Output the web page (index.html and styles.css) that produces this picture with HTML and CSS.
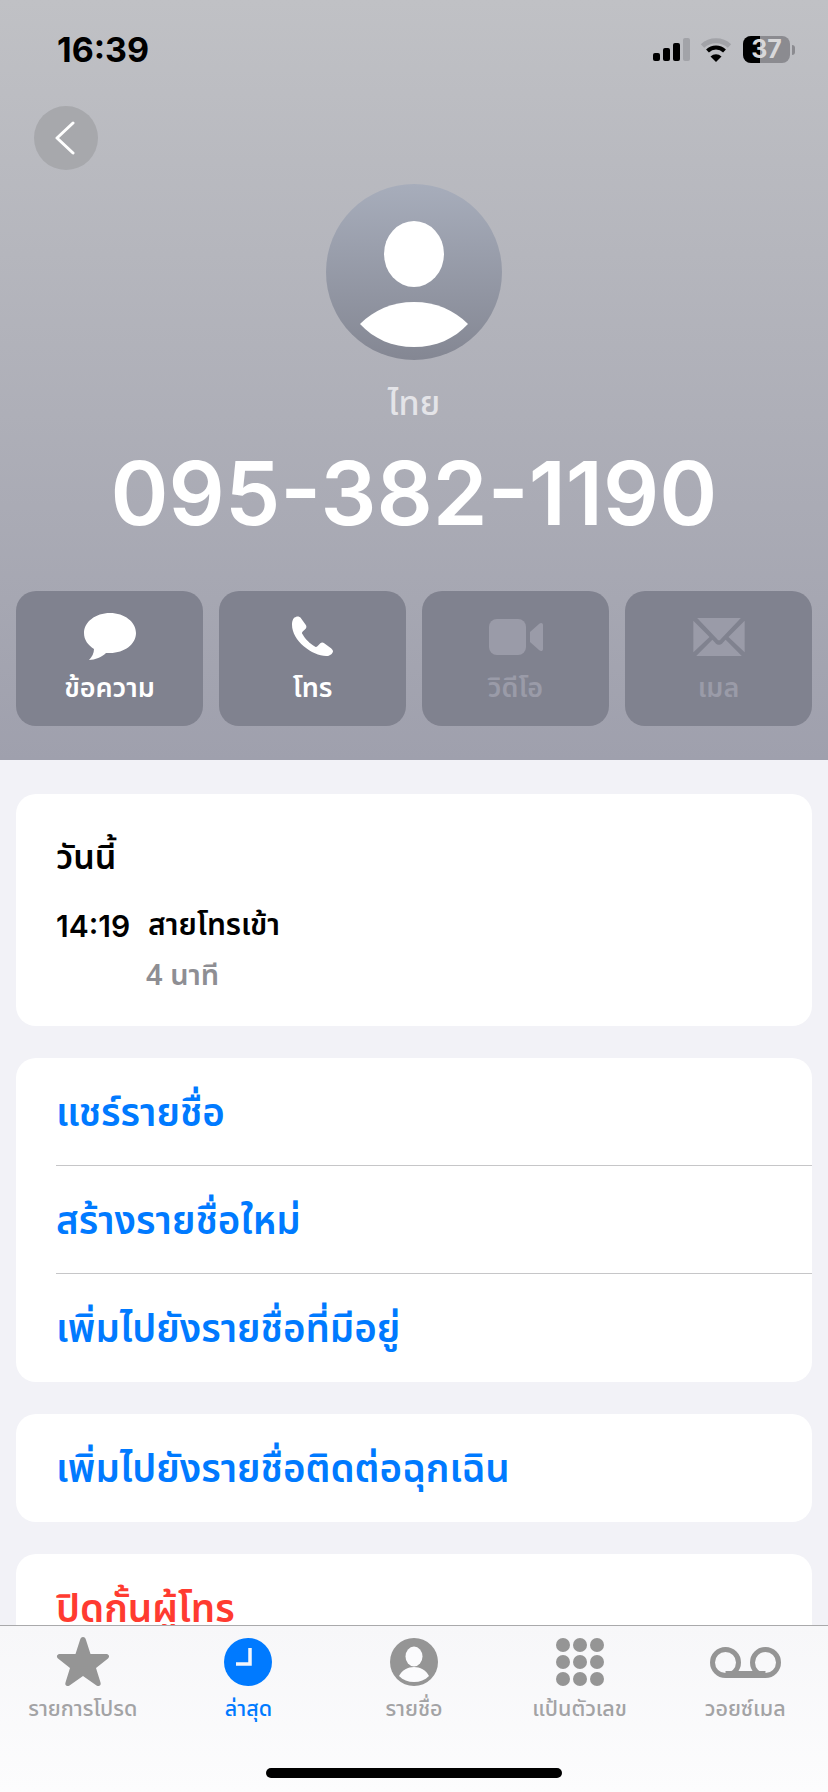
FILE: index.html
```html
<!DOCTYPE html>
<html lang="th">
<head>
    <meta charset="UTF-8">
    <title>095-382-1190</title>
    <link rel="stylesheet" href="styles.css">
</head>
<body>
    <div class="phone">
        <div class="header">
            <div class="statusbar">
                <span class="clock">16:39</span>
                <div class="status-icons">
                    <svg width="37" height="23" viewBox="0 0 37 23">
                        <rect x="0" y="15" width="7" height="8" rx="2" fill="#000"/>
                        <rect x="10" y="10" width="7" height="13" rx="2" fill="#000"/>
                        <rect x="20" y="5" width="7" height="18" rx="2" fill="#000"/>
                        <rect x="30" y="0" width="7" height="23" rx="2" fill="#a2a3a8"/>
                    </svg>
                    <svg width="32" height="24" viewBox="0 0 31 24">
                        <path d="M2 8 A20 20 0 0 1 29 8" fill="none" stroke="#a2a3a8" stroke-width="5"/>
                        <path d="M7 13 A12 12 0 0 1 24 13" fill="none" stroke="#000" stroke-width="4"/>
                        <path d="M15.500 24 L10 18.500 A8 8 0 0 1 21 18.500 Z" fill="#000"/>
                    </svg>
                    <div class="battery">
                        <div class="battery-level"></div>
                        <span class="battery-num">37</span>
                    </div>
                    <div class="battery-tip"></div>
                </div>
            </div>
            <div class="backbtn">
                <svg width="22" height="34" viewBox="0 0 22 34"><path d="M18 2 L2 17 L18 32" fill="none" stroke="#fff" stroke-width="3" stroke-linecap="round" stroke-linejoin="round"/></svg>
            </div>
            <div class="avatar">
                <svg width="176" height="176" viewBox="0 0 176 176">
                    <ellipse cx="88" cy="70" rx="30" ry="33" fill="#fff"/>
                    <path d="M34 140 C48 126 66 118 88 118 C110 118 128 126 142 140 C128 155 110 163 88 163 C66 163 48 155 34 140 Z" fill="#fff"/>
                </svg>
            </div>
            <div class="country">ไทย</div>
            <div class="number">095-382-1190</div>
            <div class="actions">
                <div class="action">
                    <div class="action-icon">
                        <svg width="52" height="47" viewBox="0 0 52 47"><path d="M26 0 C11.500 0 0 9 0 20 C0 27 4 32 10 36 C10 40 8 44 5 47 C11 47 18 44 22 40 C23 40 25 40 26 40 C40.500 40 52 31 52 20 C52 9 40.500 0 26 0 Z" fill="#fff"/></svg>
                    </div>
                    <span>ข้อความ</span>
                </div>
                <div class="action">
                    <div class="action-icon">
                        <svg width="43" height="41" viewBox="0 0 44 42"><path d="M5 1 C3 1 1 4 1 9 C1 17 6 25 13 31 C20 37 29 41 36 41 C40 41 43 38 43 36 C43 35 42 34 41 33 L34 28 C33 27 31 27 30 28 L27 31 C26 32 25 32 24 31 C20 29 14 23 12 19 C11 18 11 17 12 16 L15 13 C16 12 16 10 15 9 L10 2 C9 1 7 0 5 1 Z" fill="#fff"/></svg>
                    </div>
                    <span>โทร</span>
                </div>
                <div class="action action-off">
                    <div class="action-icon">
                        <svg width="54" height="36" viewBox="0 0 54 36"><rect x="0" y="0" width="37" height="36" rx="8" fill="#9a9ba8"/><path d="M41 13 L50 5 C52 3 54 4 54 6 L54 30 C54 32 52 33 50 31 L41 23 Z" fill="#9a9ba8"/></svg>
                    </div>
                    <span>วิดีโอ</span>
                </div>
                <div class="action action-off">
                    <div class="action-icon">
                        <svg width="52" height="38" viewBox="0 0 54 40"><path d="M4 0 L50 0 L29 22 C28 24 26 24 25 22 Z M0 3 L17 20 L0 36 Z M54 3 L37 20 L54 36 Z M3 40 L20 23 L23 26 C25 29 29 29 31 26 L34 23 L51 40 Z" fill="#9a9ba8"/></svg>
                    </div>
                    <span>เมล</span>
                </div>
            </div>
        </div>

        <div class="content">
            <div class="card recents">
                <div class="recents-title">วันนี้</div>
                <div class="recents-row">
                    <span class="recents-time">14:19</span>
                    <span>สายโทรเข้า</span>
                </div>
                <div class="recents-duration">4 นาที</div>
            </div>
            <div class="card">
                <div class="row">แชร์รายชื่อ</div>
                <div class="row">สร้างรายชื่อใหม่</div>
                <div class="row">เพิ่มไปยังรายชื่อที่มีอยู่</div>
            </div>
            <div class="card">
                <div class="row">เพิ่มไปยังรายชื่อติดต่อฉุกเฉิน</div>
            </div>
            <div class="card">
                <div class="row row-danger">ปิดกั้นผู้โทร</div>
            </div>
        </div>

        <div class="tabbar">
            <div class="tab">
                <div class="tab-icon">
                    <svg width="54" height="50" viewBox="0 0 54 50"><path d="M27 0 C28.500 0 29.500 1 30 3 L34.500 17 L50 17 C53 17 54 19.500 52 21.500 L40 31 L44.500 45.500 C45.500 48.500 43 50 40.500 48.500 L27 39 L13.500 48.500 C11 50 8.500 48.500 9.500 45.500 L14 31 L2 21.500 C0 19.500 1 17 4 17 L19.500 17 L24 3 C24.500 1 25.500 0 27 0 Z" fill="#959595"/></svg>
                </div>
                <span>รายการโปรด</span>
            </div>
            <div class="tab tab-active">
                <div class="tab-icon">
                    <svg width="48" height="48" viewBox="0 0 48 48"><circle cx="24" cy="24" r="24" fill="#007aff"/><path d="M26 10 L26 26 L12 26" fill="none" stroke="#f4f6fb" stroke-width="3.500"/></svg>
                </div>
                <span>ล่าสุด</span>
            </div>
            <div class="tab">
                <div class="tab-icon">
                    <svg width="48" height="48" viewBox="0 0 48 48"><circle cx="24" cy="24" r="24" fill="#959595"/><ellipse cx="24" cy="18.500" rx="8.500" ry="10" fill="#fbfbfd"/><path d="M9 38 C12 32 18 29 24 29 C30 29 36 32 39 38 C35 42 30 44 24 44 C18 44 13 42 9 38 Z" fill="#fbfbfd"/></svg>
                </div>
                <span>รายชื่อ</span>
            </div>
            <div class="tab">
                <div class="tab-icon">
                    <svg width="50" height="48" viewBox="0 0 50 48">
                        <g fill="#959595">
                            <circle cx="8" cy="7" r="7"/><circle cx="25" cy="7" r="7"/><circle cx="42" cy="7" r="7"/>
                            <circle cx="8" cy="24" r="7"/><circle cx="25" cy="24" r="7"/><circle cx="42" cy="24" r="7"/>
                            <circle cx="8" cy="41" r="7"/><circle cx="25" cy="41" r="7"/><circle cx="42" cy="41" r="7"/>
                        </g>
                    </svg>
                </div>
                <span>แป้นตัวเลข</span>
            </div>
            <div class="tab">
                <div class="tab-icon">
                    <svg width="71" height="31" viewBox="0 0 71 31"><circle cx="15.500" cy="15.500" r="13" fill="none" stroke="#959595" stroke-width="5"/><circle cx="55.500" cy="15.500" r="13" fill="none" stroke="#959595" stroke-width="5"/><rect x="15.500" y="24" width="40" height="7" fill="#959595"/></svg>
                </div>
                <span>วอยซ์เมล</span>
            </div>
        </div>
        <div class="homebar"></div>
    </div>
</body>
</html>
```

FILE: styles.css
```css
body {
    font-family: "Noto Sans Thai", "Noto Sans", "Liberation Sans", sans-serif;
    margin: 0;
    background-color: #f2f2f7;
}
.phone {
    position: relative;
    width: 828px;
    height: 1792px;
    overflow: hidden;
}
.header {
    height: 760px;
    background: linear-gradient(#c0c1c5, #9fa0ad);
    padding: 0 16px;
    box-sizing: border-box;
    display: flex;
    flex-direction: column;
    align-items: center;
}
.statusbar {
    width: 100%;
    display: flex;
    justify-content: space-between;
    align-items: center;
    padding: 31px 17px 0 41px;
    box-sizing: border-box;
    height: 68px;
}
.clock {
    font-family: Inter, "Liberation Sans", sans-serif;
    font-size: 34px;
    font-weight: 700;
    color: #000;
}
.status-icons {
    display: flex;
    align-items: center;
    gap: 10px;
}
.battery {
    position: relative;
    width: 47px;
    height: 27px;
    border-radius: 8px;
    background-color: #8b8b90;
    margin-left: 1px;
}
.battery-level {
    width: 17px;
    height: 27px;
    border-radius: 8px 0 0 8px;
    background-color: #000;
}
.battery-num {
    position: absolute;
    top: 0;
    left: 0;
    width: 47px;
    text-align: center;
    font-family: Inter, "Liberation Sans", sans-serif;
    font-size: 25px;
    line-height: 27px;
    font-weight: 700;
    color: #d8d8da;
}
.battery-tip {
    width: 3px;
    height: 10px;
    margin-left: -8px;
    border-radius: 0 4px 4px 0;
    background-color: #8b8b90;
}
.backbtn {
    align-self: flex-start;
    width: 64px;
    height: 64px;
    margin: 38px 0 0 18px;
    border-radius: 50%;
    background-color: #a7a8ac;
    display: flex;
    align-items: center;
    justify-content: center;
}
.avatar {
    width: 176px;
    height: 176px;
    margin-top: 14px;
    border-radius: 50%;
    overflow: hidden;
    background: linear-gradient(#a7adbb, #848793);
    flex-shrink: 0;
}
.avatar svg {
    display: block;
}
.country {
    margin-top: 23px;
    font-size: 34px;
    line-height: 44px;
    font-weight: 500;
    color: #e4e4e8;
}
.number {
    margin-top: 16px;
    font-family: Inter, "Liberation Sans", sans-serif;
    font-size: 88px;
    line-height: 100px;
    font-weight: 600;
    color: #fff;
    white-space: nowrap;
}
.actions {
    width: 100%;
    display: flex;
    gap: 16px;
    margin-top: 48px;
}
.action {
    flex: 1;
    height: 135px;
    border-radius: 20px;
    background-color: #80828f;
    display: flex;
    flex-direction: column;
    align-items: center;
    padding-top: 22px;
    box-sizing: border-box;
    font-size: 27px;
    line-height: 36px;
    font-weight: 600;
    color: #fff;
}
.action-icon {
    height: 47px;
    margin-bottom: 11px;
    display: flex;
    align-items: center;
}
.action-off {
    color: #9a9ba8;
}
.content {
    padding: 34px 16px 0;
}
.card {
    background-color: #fff;
    border-radius: 20px;
    margin-bottom: 32px;
    padding-left: 40px;
}
.recents {
    height: 232px;
    box-sizing: border-box;
    padding-top: 41px;
}
.recents-title {
    font-size: 34px;
    line-height: 48px;
    font-weight: 600;
    color: #000;
}
.recents-row {
    display: flex;
    gap: 18px;
    margin-top: 23px;
    font-size: 30px;
    line-height: 40px;
    font-weight: 600;
    color: #000;
}
.recents-time {
    font-family: Inter, "Liberation Sans", sans-serif;
    font-weight: 600;
}
.recents-duration {
    margin: 10px 0 0 90px;
    font-size: 29px;
    line-height: 40px;
    font-weight: 600;
    color: #8e8e93;
}
.row {
    height: 108px;
    padding-top: 4px;
    line-height: 104px;
    font-size: 38.5px;
    font-weight: 600;
    color: #007aff;
    box-sizing: border-box;
    border-bottom: 1px solid #c6c6c8;
}
.row:last-child {
    border-bottom: none;
}
.row-danger {
    color: #ff3b30;
}
.tabbar {
    position: absolute;
    left: 0;
    right: 0;
    bottom: 0;
    height: 167px;
    border-top: 1px solid #a9a9ab;
    box-sizing: border-box;
    background: linear-gradient(#f7f7f9, #fcfcfd);
    display: flex;
    padding-top: 11px;
}
.tab {
    flex: 1;
    display: flex;
    flex-direction: column;
    align-items: center;
    font-size: 21.5px;
    line-height: 30px;
    font-weight: 500;
    color: #a3a3a5;
}
.tab-icon {
    height: 50px;
    margin-bottom: 8px;
    display: flex;
    align-items: center;
}
.tab-active {
    color: #007aff;
}
.homebar {
    position: absolute;
    left: 266px;
    bottom: 14px;
    width: 296px;
    height: 10px;
    border-radius: 5px;
    background-color: #000;
}
```
